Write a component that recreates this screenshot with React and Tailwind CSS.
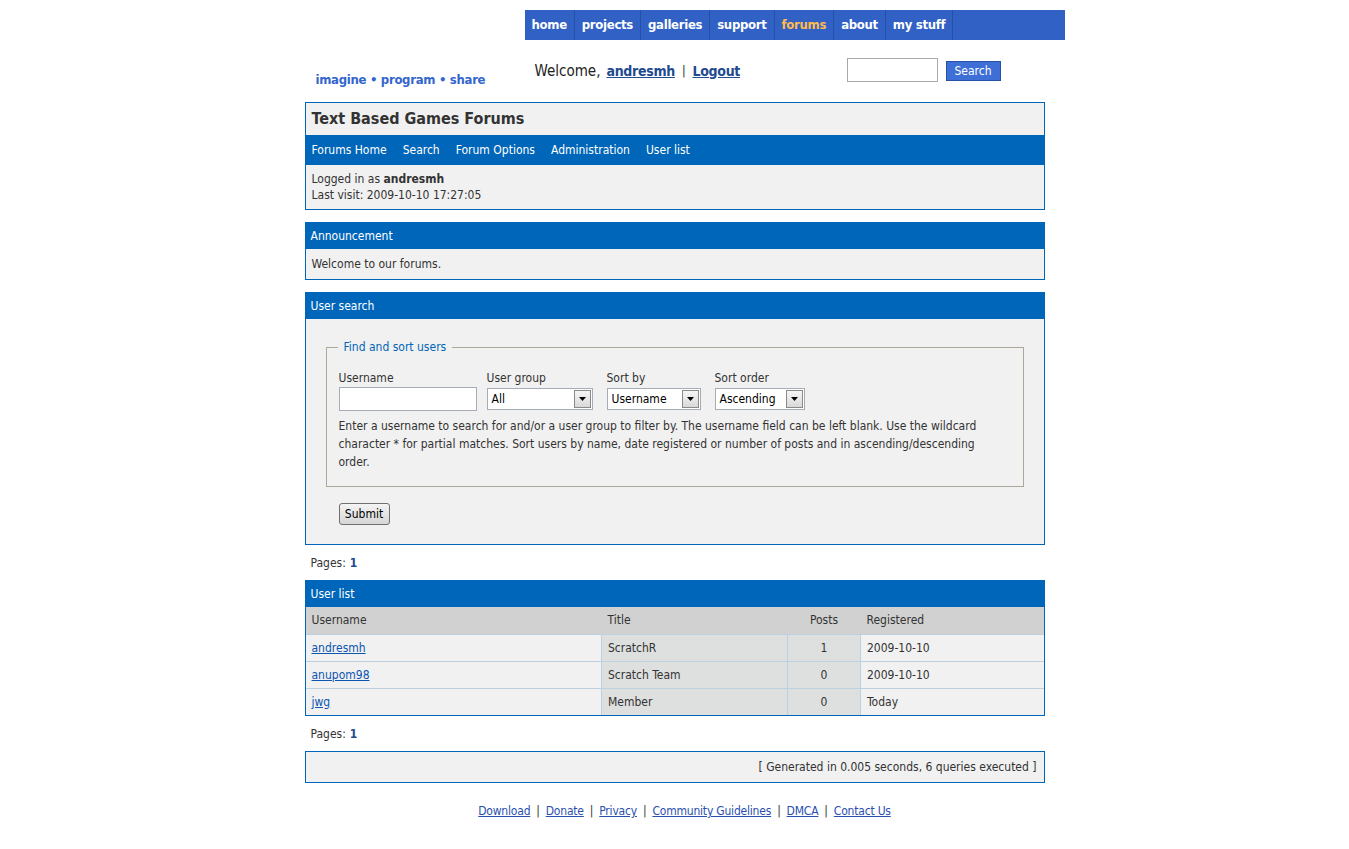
import React from "react";

const navItems = ["home", "projects", "galleries", "support", "forums", "about", "my stuff"];
const forumNav = ["Forums Home", "Search", "Forum Options", "Administration", "User list"];
const users = [
  { name: "andresmh", title: "ScratchR", posts: 1, reg: "2009-10-10" },
  { name: "anupom98", title: "Scratch Team", posts: 0, reg: "2009-10-10" },
  { name: "jwg", title: "Member", posts: 0, reg: "Today" },
];
const footerLinks = ["Download", "Donate", "Privacy", "Community Guidelines", "DMCA", "Contact Us"];

function FakeSelect({ value, width }) {
  return (
    <div className={`flex h-[22px] items-center border border-[#a5acb5] bg-white ${width}`}>
      <span className="flex-1 pl-[4px] text-[12px] text-black">{value}</span>
      <span className="mr-px flex h-[18px] w-[17px] items-center justify-center border border-[#8a8a8a] bg-gradient-to-b from-[#f6f6f6] to-[#d9d9d9]">
        <svg width="7" height="4" viewBox="0 0 7 4">
          <path d="M0 0h7L3.5 4z" fill="#000" />
        </svg>
      </span>
    </div>
  );
}

function BoxHead({ children }) {
  return (
    <div className="flex h-[26px] items-center bg-[#0066b9] px-[5px] text-[12px] text-white">
      {children}
    </div>
  );
}

export default function App() {
  return (
    <div
      className="min-h-[849px] bg-white text-[12px] text-[#333]"
      style={{ fontFamily: '"DejaVu Sans Condensed", Tahoma, "DejaVu Sans", sans-serif' }}
    >
      <div className="mx-auto w-[740px]">
        {/* header */}
        <div className="w-[760px]">
          <div className="ml-[220px] mt-[10px] flex h-[30px] w-[540px] bg-[#3161c4]">
            {navItems.map((item) => (
              <div
                key={item}
                className={`flex items-center border-r border-[#2450a6] px-[7px] text-[13px] font-bold tracking-[-0.3px] ${
                  item === "forums" ? "text-[#ffbb4e]" : "text-white"
                }`}
              >
                {item}
              </div>
            ))}
          </div>
          <div className="flex h-[62px] items-start">
            <div className="mt-[30px] w-[230px] pl-[11px] text-[13px] font-bold tracking-[-0.3px] text-[#3366cc]">
              imagine • program • share
            </div>
            <div className="mt-[20px] flex w-[312px] items-center text-[15px] text-[#222]">
              <span>Welcome,</span>
              <a className="ml-[6px] text-[14px] font-bold tracking-[-0.3px] text-[#224a8f] underline">andresmh</a>
              <span className="mx-[7px] text-[12px]">|</span>
              <a className="text-[14px] font-bold tracking-[-0.3px] text-[#224a8f] underline">Logout</a>
            </div>
            <div className="mt-[18px] h-[24px] w-[91px] border border-[#aaa] bg-white" />
            <div className="ml-[8px] mt-[21px] flex h-[20px] w-[55px] items-center justify-center border border-[#2450a6] bg-[#3d6fd6] text-[12px] text-white">
              Search
            </div>
          </div>
        </div>

        {/* board header */}
        <div className="border border-[#0066b9] bg-[#f1f1f1]">
          <div className="flex h-[32px] items-center px-[6px] text-[16px] font-bold text-[#333]">
            Text Based Games Forums
          </div>
          <div className="flex h-[30px] items-center gap-[16px] bg-[#0066b9] px-[6px] text-[12px] text-white">
            {forumNav.map((n) => (
              <span key={n}>{n}</span>
            ))}
          </div>
          <div className="px-[6px] pb-[6px] pt-[6px] leading-[16px]">
            <div>
              Logged in as <span className="font-bold">andresmh</span>
            </div>
            <div>Last visit: 2009-10-10 17:27:05</div>
          </div>
        </div>

        {/* announcement */}
        <div className="mt-[12px] border border-[#0066b9] bg-[#f1f1f1]">
          <BoxHead>Announcement</BoxHead>
          <div className="flex h-[30px] items-center px-[6px]">Welcome to our forums.</div>
        </div>

        {/* user search */}
        <div className="mt-[12px] border border-[#0066b9] bg-[#f1f1f1]">
          <BoxHead>User search</BoxHead>
          <div className="px-[20px] pb-[19px] pt-[19px]">
            <fieldset className="border border-[#aca899] px-[12px] pb-[15px] pt-[2px]">
              <legend className="ml-[-1px] px-[6px] text-[12px] text-[#0066b9]">Find and sort users</legend>
              <div className="mt-[12px] flex">
                <div className="w-[148px]">
                  <div className="leading-[16px]">Username</div>
                  <div className="mt-[1px] h-[24px] w-[138px] border border-[#a5acb5] bg-white" />
                </div>
                <div className="w-[120px]">
                  <div className="leading-[16px]">User group</div>
                  <div className="mt-[2px]">
                    <FakeSelect value="All" width="w-[106px]" />
                  </div>
                </div>
                <div className="w-[108px]">
                  <div className="leading-[16px]">Sort by</div>
                  <div className="mt-[2px]">
                    <FakeSelect value="Username" width="w-[94px]" />
                  </div>
                </div>
                <div>
                  <div className="leading-[16px]">Sort order</div>
                  <div className="mt-[2px]">
                    <FakeSelect value="Ascending" width="w-[90px]" />
                  </div>
                </div>
              </div>
              <p className="mt-[6px] pr-[8px] leading-[18px]">
                Enter a username to search for and/or a user group to filter by. The username field can be left blank. Use
                the wildcard character * for partial matches. Sort users by name, date registered or number of posts and in
                ascending/descending order.
              </p>
            </fieldset>
            <div className="ml-[13px] mt-[16px] flex h-[22px] w-[51px] items-center justify-center rounded-[3px] border border-[#707070] bg-gradient-to-b from-[#f4f4f4] to-[#d6d6d6] text-[12px] text-black">
              Submit
            </div>
          </div>
        </div>

        <div className="flex h-[35px] items-center px-[6px]">
          Pages: <span className="ml-[4px] font-bold text-[#224a8f]">1</span>
        </div>

        {/* user list */}
        <div className="border border-[#0066b9]">
          <BoxHead>User list</BoxHead>
          <table className="w-full border-collapse text-[12px]">
            <thead>
              <tr className="h-[27px] bg-[#d1d1d1] text-left">
                <th className="w-[296px] px-[6px] font-normal">Username</th>
                <th className="w-[186px] px-[6px] font-normal">Title</th>
                <th className="w-[73px] px-[6px] text-center font-normal">Posts</th>
                <th className="px-[6px] font-normal">Registered</th>
              </tr>
            </thead>
            <tbody>
              {users.map((u) => (
                <tr key={u.name} className="h-[27px]">
                  <td className="border-t border-[#bdd0e0] bg-[#f1f1f1] px-[6px]">
                    <a className="text-[#0c55b0] underline">{u.name}</a>
                  </td>
                  <td className="border-l border-t border-[#bdd0e0] bg-[#dee0df] px-[6px]">{u.title}</td>
                  <td className="border-l border-t border-[#bdd0e0] bg-[#dee0df] px-[6px] text-center">{u.posts}</td>
                  <td className="border-l border-t border-[#bdd0e0] bg-[#f1f1f1] px-[6px]">{u.reg}</td>
                </tr>
              ))}
            </tbody>
          </table>
        </div>

        <div className="flex h-[35px] items-center px-[6px]">
          Pages: <span className="ml-[4px] font-bold text-[#224a8f]">1</span>
        </div>

        <div className="flex h-[32px] items-center justify-end border border-[#0066b9] bg-[#f1f1f1] px-[7px]">
          [ Generated in 0.005 seconds, 6 queries executed ]
        </div>

        <div className="mt-[19px] flex w-[760px] justify-center text-[12px] tracking-[-0.2px]">
          {footerLinks.map((l, i) => (
            <span key={l} className="flex">
              {i > 0 && <span className="mx-[6px] text-[#333]">|</span>}
              <a className="text-[#2a4fae] underline">{l}</a>
            </span>
          ))}
        </div>
      </div>
    </div>
  );
}
